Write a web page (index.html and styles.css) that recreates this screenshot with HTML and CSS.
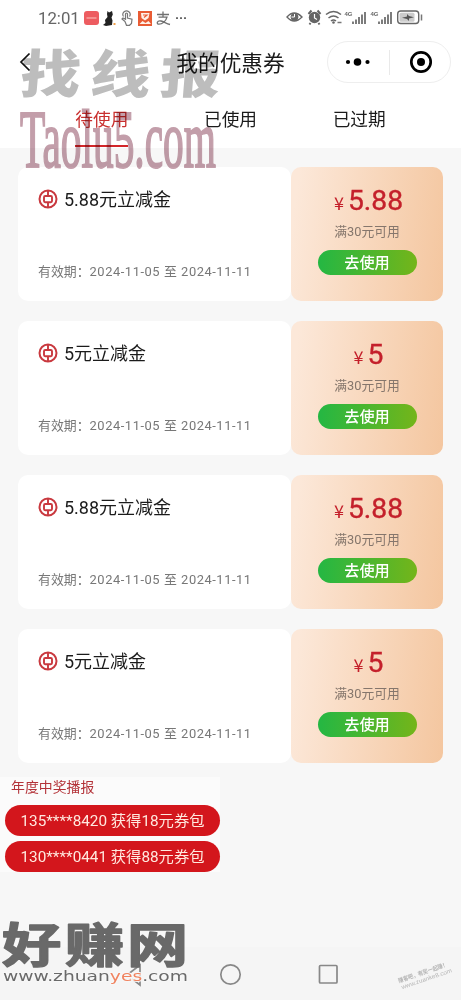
FILE: index.html
```html
<!DOCTYPE html>
<html lang="zh-CN">
<head>
<meta charset="utf-8">
<title>我的优惠券</title>
<link rel="stylesheet" href="styles.css">
</head>
<body>
<svg class="defs" width="0" height="0">
  <symbol id="bank" viewBox="0 0 20 20"><g fill="none" stroke="#c9393f"><circle cx="10" cy="10" r="8.500" stroke-width="2"/><rect x="6" y="7" width="8" height="6.200" rx="1.200" stroke-width="1.900"/><path d="M10 1.500v5.500M10 13v5.500" stroke-width="1.900"/></g></symbol>
  <symbol id="signal" viewBox="0 0 15 13"><path d="M1.500 13v-2.500M4.500 13v-4.500M7.500 13v-7M10.500 13v-9.500M13.500 13V1" stroke="#666" stroke-width="1.700"/></symbol>
</svg>
<main class="phone">
  <header class="top">
    <div class="status">
      <span class="clock">12:01</span>
      <svg class="apps" width="106" height="18" viewBox="0 0 106 18">
        <rect x="0" y="2" width="15" height="14" rx="3" fill="#ed5c60"/><path d="M2.500 9h10" stroke="#f9b4b0" stroke-width="1.200"/>
        <path d="M23 5l.5-3 1.500 1.500L28 2l.8 3.500-1.300 3 1 3-.5 4.500-6 1-3-1 2.500-2-.5-3 2.500-3z" fill="#222"/><path d="M29.500 14h2v2h-2z" fill="#f0a04a"/>
        <g fill="none" stroke="#777" stroke-width="1.200"><path d="M41 12.500l-3-2.500 1-1 2.500 1.300V5a1 1 0 0 1 2 0v4l4.500 1.200-.5 4.300-2 1.800h-3z"/><path d="M39.500 7.500a3.600 3.600 0 1 1 6 0"/></g>
        <rect x="54" y="2" width="14" height="15" fill="#e95c34"/><path d="M57 4h8.500l-1 5-3.500 2.500L57.500 9zM55.500 15l3-3 3 2 3-2 2.500 3z" fill="#fff1e8"/><path d="M59 6h4l-3 2.500" fill="none" stroke="#e95c34" stroke-width="1.200"/>
        <g fill="none" stroke="#707070" stroke-width="1.300"><path d="M73 5.500h12M79 2.500V8M74.500 8.200h8.500c-1 4-5 7-8 7-3 0-2-4 2-3.200 3 .6 5 2.500 9 3.500"/></g>
        <path d="M92 9.200h2M96 9.200h2M100 9.200h2" stroke="#666" stroke-width="1.800"/>
      </svg>
      <svg class="indicators" width="140" height="20" viewBox="0 0 140 20">
        <g fill="none" stroke="#666"><path d="M1 10q7-8 15 0-8 8-15 0z" stroke-width="1.400"/><circle cx="8.500" cy="10" r="3.500" fill="#666"/><path d="M8.500 7v3h-3" stroke="#fff"/></g>
        <circle cx="28.500" cy="10.500" r="5.700" fill="#666"/><path d="M22.500 7l3-3.500M34.500 7l-3-3.500M24.500 16l-1 1.500M32.500 16l1 1.500" stroke="#666" stroke-width="2"/><path d="M28.500 7v4l2.500 1.500" stroke="#fff" stroke-width="1.200" fill="none"/>
        <g fill="none" stroke="#666" stroke-width="1.600"><path d="M40 7.500q7.500-6 15 0M42.500 11q5-4 10 0M45 14q2.500-2 5 0"/></g><circle cx="47.500" cy="15.500" r="1.300" fill="#666"/><path d="M51.500 15.500h4" stroke="#777" stroke-width="1.500"/>
        <text x="58.500" y="9" class="net">4G</text><use href="#signal" x="65.500" y="4" width="15" height="13"/>
        <text x="84.500" y="9" class="net">4G</text><use href="#signal" x="91.500" y="4" width="15" height="13"/>
        <rect x="111.700" y="4" width="21" height="12.500" rx="3" fill="none" stroke="#666" stroke-width="1.400"/><rect x="113.500" y="5.800" width="15" height="9" rx="1.500" fill="#ccc"/><path d="M116 10.800l5-1.300V7l2 2 5 1.200-5 1.300v2.500l-2-2z" fill="#555"/><path d="M135.500 7.500v6" stroke="#777" stroke-width="1.500"/>
      </svg>
    </div>
    <div class="titlebar">
      <svg class="back" width="12" height="20" viewBox="0 0 12 20"><path d="M10.500 1.500L2 10l8.500 8.500" fill="none" stroke="#111" stroke-width="1.700"/></svg>
      <h1 class="title">我的优惠券</h1>
      <div class="capsule">
        <svg width="26" height="10" viewBox="0 0 26 10"><circle cx="3" cy="5" r="2.100"/><circle cx="12.500" cy="5" r="3.800"/><circle cx="22.500" cy="5" r="2.100"/></svg>
        <i class="divider"></i>
        <svg width="24" height="24" viewBox="0 0 24 24"><circle cx="12" cy="12" r="9.700" fill="none" stroke="#000" stroke-width="2.700"/><circle cx="12" cy="12" r="4"/></svg>
      </div>
    </div>
    <nav class="tabs"><span class="tab active">待使用</span><span class="tab">已使用</span><span class="tab">已过期</span></nav>
  </header>

  <section class="coupons">
    <article class="coupon">
      <div class="info"><div class="name"><svg class="bank"><use href="#bank"/></svg>5.88元立减金</div><div class="date"><span>有效期：</span><span class="range">2024-11-05 至 2024-11-11</span></div></div>
      <div class="value"><div class="price"><small>¥</small>5.88</div><div class="rule">满30元可用</div><div class="use">去使用</div></div>
    </article>
    <article class="coupon">
      <div class="info"><div class="name"><svg class="bank"><use href="#bank"/></svg>5元立减金</div><div class="date"><span>有效期：</span><span class="range">2024-11-05 至 2024-11-11</span></div></div>
      <div class="value"><div class="price"><small>¥</small>5</div><div class="rule">满30元可用</div><div class="use">去使用</div></div>
    </article>
    <article class="coupon">
      <div class="info"><div class="name"><svg class="bank"><use href="#bank"/></svg>5.88元立减金</div><div class="date"><span>有效期：</span><span class="range">2024-11-05 至 2024-11-11</span></div></div>
      <div class="value"><div class="price"><small>¥</small>5.88</div><div class="rule">满30元可用</div><div class="use">去使用</div></div>
    </article>
    <article class="coupon">
      <div class="info"><div class="name"><svg class="bank"><use href="#bank"/></svg>5元立减金</div><div class="date"><span>有效期：</span><span class="range">2024-11-05 至 2024-11-11</span></div></div>
      <div class="value"><div class="price"><small>¥</small>5</div><div class="rule">满30元可用</div><div class="use">去使用</div></div>
    </article>
  </section>

  <section class="news">
    <div class="news-title">年度中奖播报</div>
    <div class="pill">135****8420 获得18元券包</div>
    <div class="pill">130****0441 获得88元券包</div>
  </section>

  <footer class="navbar">
    <svg width="461" height="53" viewBox="0 0 461 53"><g fill="none" stroke="#888" stroke-width="1.700"><path d="M140 18v20l-13-10z"/><circle cx="230.500" cy="27.500" r="9.700"/><rect x="319.500" y="18.500" width="17.500" height="17.500" rx="1"/></g></svg>
  </footer>

  <svg class="mark mark-top" width="260" height="180" viewBox="0 0 260 180">
    <g class="brush"><text x="0" y="0" transform="translate(19 63) scale(1.160 1) skewX(-4)">找</text><text x="0" y="0" transform="translate(89 63) scale(1.160 1) skewX(-4)">线</text><text x="0" y="0" transform="translate(159 63) scale(1.160 1) skewX(-4)">报</text></g>
    <text class="domain" x="20" y="137" textLength="196" lengthAdjust="spacingAndGlyphs">Taolu5.com</text>
  </svg>
  <svg class="mark mark-bottom" width="200" height="90" viewBox="0 0 200 90">
    <g class="site"><text x="0" y="0" transform="translate(2 62) scale(1.260 1)">好</text><text x="0" y="0" transform="translate(65 62) scale(1.260 1)">赚</text><text x="0" y="0" transform="translate(127 62) scale(1.300 1)">网</text></g>
    <text class="url" x="3" y="81" textLength="185" lengthAdjust="spacingAndGlyphs">www.zhuan<tspan fill="#f0825e">yes</tspan>.com</text>
  </svg>
  <svg class="mark mark-corner" width="70" height="44" viewBox="0 0 70 44"><g transform="translate(8 27) rotate(-19)"><text class="tiny bold" x="0" y="0" textLength="52" lengthAdjust="spacingAndGlyphs">赚客吧，有奖一起赚！</text><text class="tiny" x="1" y="7" textLength="53" lengthAdjust="spacingAndGlyphs">www.zuanke8.com</text></g></svg>
</main>
</body>
</html>
```
FILE: styles.css
```css
* { box-sizing: border-box; }
body { margin: 0; font-family: Roboto, "Noto Sans CJK SC", sans-serif; color: #1b1b1b; }
.defs { position: absolute; }
.phone { position: relative; width: 461px; height: 1000px; overflow: hidden; background: #f7f7f7; display: flex; flex-direction: column; }
.top { height: 148px; background: #fff; flex: none; }
.status { height: 36px; padding: 0 36px 0 38px; display: flex; align-items: center; }
.clock { width: 46px; font-size: 16.800px; line-height: 20px; color: #666; }
.indicators { margin-left: auto; margin-right: -1px; margin-top: -2px; }
.apps { margin-top: -1px; }
.net { font: bold 6px "Liberation Sans", sans-serif; fill: #666; }
.titlebar { height: 52px; padding: 0 10px 0 19px; display: grid; grid-template-columns: 120px 188px 124px; align-items: center; }
.title { margin: 0; padding: 3px 5px 0 0; text-align: center; font-size: 21.700px; font-weight: 400; line-height: 28px; white-space: nowrap; }
.capsule { height: 42px; border: 1px solid #eee; border-radius: 21px; display: flex; align-items: center; padding: 0 17px; justify-content: space-between; }
.divider { width: 1px; height: 25px; background: #e9e9e9; margin-left: 6px; margin-right: 8px; }
.tabs { height: 60px; padding: 0 37.500px; display: grid; grid-template-columns: repeat(3, 1fr); justify-items: center; }
.tab { height: 60px; padding-top: 19px; font-size: 17.700px; line-height: 26px; }
.tab.active { color: #c9302f; background: linear-gradient(#d3262a, #d3262a) 0 57px / 100% 2px no-repeat; }
.coupons { padding: 18.500px 18px 0; display: grid; gap: 19.500px; flex: none; }
.coupon { height: 134.500px; display: grid; grid-template-columns: 273px 152px; }
.info { background: #fff; border-radius: 10px; padding: 20px 20px 19px; display: flex; flex-direction: column; justify-content: space-between; }
.name { display: flex; align-items: center; font-size: 18px; line-height: 26px; }
.bank { width: 20px; height: 20px; margin: -1px 6px 0 0; }
.date { display: flex; font-size: 12.900px; line-height: 20px; color: #777; white-space: nowrap; }
.range { letter-spacing: .55px; }
.value { border-radius: 10px; background: linear-gradient(97deg, #fce8d9 5%, #f4c69f 100%); display: flex; flex-direction: column; align-items: center; }
.price { height: 54px; padding: 17px 0 0 3px; font-size: 28.300px; line-height: 34px; color: #c4202b; -webkit-text-stroke: .35px #c4202b; }
.price small { font-family: "Noto Sans CJK SC", sans-serif; font-size: 18px; line-height: 1; margin-right: 4px; -webkit-text-stroke: 0; }
.rule { height: 29.500px; font-size: 12.800px; line-height: 22px; color: #85766c; }
.use { width: 99px; height: 25px; border-radius: 13px; background: linear-gradient(90deg, #24b743, #74b51a); color: #fff; font-size: 15.200px; font-weight: 500; line-height: 26px; text-align: center; }
.news { width: 220px; margin-top: 14px; padding-left: 5px; background: #fbfbfb; display: grid; grid-template-rows: 28px 31px 36px; flex: none; }
.news .pill + .pill { margin-top: 5px; }
.news-title { padding-left: 6px; font-size: 13.900px; line-height: 20px; color: #b33238; }
.pill { height: 31px; border-radius: 16px; background: #d3161c; color: #ffe9df; font-size: 15.300px; line-height: 32px; text-align: center; white-space: nowrap; }
.navbar { margin-top: auto; height: 53px; background: #f5f5f5; }
.navbar svg { display: block; }
.mark { position: absolute; pointer-events: none; }
.mark-top { left: 0; top: 30px; mix-blend-mode: multiply; }
.brush { font: 900 52px "Noto Sans CJK SC", sans-serif; fill: #bdbdbd; }
.domain { font: 82px "Liberation Serif", serif; fill: #c39eaa; stroke: #c39eaa; stroke-width: 2px; }
.mark-bottom { left: 0; top: 900px; }
.site { font: 700 47px "Noto Sans CJK SC", sans-serif; fill: #696969; stroke: #696969; stroke-width: 1.500px; stroke-linejoin: round; }
.url { font: 14.500px "DejaVu Sans", sans-serif; fill: #696969; stroke: #f7f7f7; stroke-width: 2px; paint-order: stroke; }
.mark-corner { left: 391px; top: 956px; }
.tiny { font: 6px "Liberation Sans", "Noto Sans CJK SC", sans-serif; fill: #b5b5b5; }
.bold { font-weight: 700; }
```
